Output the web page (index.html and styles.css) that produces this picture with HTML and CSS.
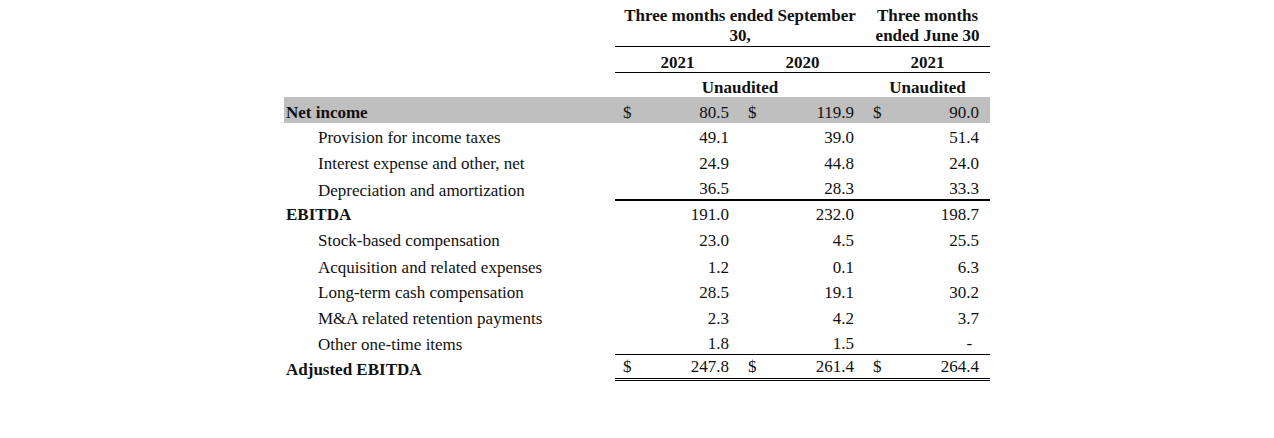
FILE: index.html
```html
<!DOCTYPE html>
<html>
<head>
<meta charset="utf-8">
<link rel="stylesheet" href="styles.css">
</head>
<body>
<div class="page">
<table class="fin">
  <colgroup>
    <col class="c-label">
    <col class="c-cur"><col class="c-val">
    <col class="c-cur"><col class="c-val">
    <col class="c-cur"><col class="c-val">
  </colgroup>
  <thead>
    <tr class="h1">
      <th></th>
      <th colspan="4" class="hd ul">Three months ended September<br>30,</th>
      <th colspan="2" class="hd ul">Three months<br>ended June 30</th>
    </tr>
    <tr class="h2">
      <th></th>
      <th colspan="2" class="hd ul yr">2021</th>
      <th colspan="2" class="hd ul yr">2020</th>
      <th colspan="2" class="hd ul">2021</th>
    </tr>
    <tr class="h3">
      <th></th>
      <th colspan="4" class="hd">Unaudited</th>
      <th colspan="2" class="hd">Unaudited</th>
    </tr>
  </thead>
  <tbody>
    <tr class="row shade r26">
      <td class="lbl b">Net income</td>
      <td class="cur">$</td><td class="val">80.5</td>
      <td class="cur">$</td><td class="val">119.9</td>
      <td class="cur">$</td><td class="val">90.0</td>
    </tr>
    <tr class="row r25">
      <td class="lbl ind">Provision for income taxes</td>
      <td class="cur"></td><td class="val">49.1</td>
      <td class="cur"></td><td class="val">39.0</td>
      <td class="cur"></td><td class="val">51.4</td>
    </tr>
    <tr class="row r26">
      <td class="lbl ind">Interest expense and other, net</td>
      <td class="cur"></td><td class="val">24.9</td>
      <td class="cur"></td><td class="val">44.8</td>
      <td class="cur"></td><td class="val">24.0</td>
    </tr>
    <tr class="row sub r27">
      <td class="lbl ind">Depreciation and amortization</td>
      <td class="cur"></td><td class="val">36.5</td>
      <td class="cur"></td><td class="val">28.3</td>
      <td class="cur"></td><td class="val">33.3</td>
    </tr>
    <tr class="row r24">
      <td class="lbl b">EBITDA</td>
      <td class="cur"></td><td class="val">191.0</td>
      <td class="cur"></td><td class="val">232.0</td>
      <td class="cur"></td><td class="val">198.7</td>
    </tr>
    <tr class="row r26">
      <td class="lbl ind">Stock-based compensation</td>
      <td class="cur"></td><td class="val">23.0</td>
      <td class="cur"></td><td class="val">4.5</td>
      <td class="cur"></td><td class="val">25.5</td>
    </tr>
    <tr class="row r27">
      <td class="lbl ind">Acquisition and related expenses</td>
      <td class="cur"></td><td class="val">1.2</td>
      <td class="cur"></td><td class="val">0.1</td>
      <td class="cur"></td><td class="val">6.3</td>
    </tr>
    <tr class="row r25">
      <td class="lbl ind">Long-term cash compensation</td>
      <td class="cur"></td><td class="val">28.5</td>
      <td class="cur"></td><td class="val">19.1</td>
      <td class="cur"></td><td class="val">30.2</td>
    </tr>
    <tr class="row r26">
      <td class="lbl ind">M&amp;A related retention payments</td>
      <td class="cur"></td><td class="val">2.3</td>
      <td class="cur"></td><td class="val">4.2</td>
      <td class="cur"></td><td class="val">3.7</td>
    </tr>
    <tr class="row sub1 r26">
      <td class="lbl ind">Other one-time items</td>
      <td class="cur"></td><td class="val">1.8</td>
      <td class="cur"></td><td class="val">1.5</td>
      <td class="cur"></td><td class="val dash">-</td>
    </tr>
    <tr class="row total r26">
      <td class="lbl b">Adjusted EBITDA</td>
      <td class="cur">$</td><td class="val">247.8</td>
      <td class="cur">$</td><td class="val">261.4</td>
      <td class="cur">$</td><td class="val">264.4</td>
    </tr>
  </tbody>
</table>
</div>
</body>
</html>
```

FILE: styles.css
```css
html, body {
  margin: 0;
  padding: 0;
  background: #ffffff;
}

.page {
  padding: 4px 0 0 284px;
  font-family: "Liberation Serif", "Times New Roman", serif;
  font-size: 17px;
  color: #111111;
}

.fin {
  table-layout: fixed;
  width: 706px;
  border-collapse: separate;
  border-spacing: 0;
}

.c-label { width: 331px; }
.c-cur { width: 24px; }
.c-val { width: 101px; }

.fin th,
.fin td {
  padding: 0;
  line-height: 20px;
  white-space: nowrap;
  box-sizing: border-box;
}

.hd {
  font-weight: bold;
  text-align: center;
  vertical-align: bottom;
}

.h1 .hd {
  line-height: 20px;
  white-space: normal;
}

.h1 th { height: 43px; vertical-align: bottom; }
.h2 th { height: 26px; line-height: 18px; }
.h3 th { height: 24px; line-height: 18px; }

.ul { border-bottom: 1px solid #000; }

.yr { padding-left: 4px; }

.row td {
  vertical-align: bottom;
  padding-bottom: 0;
}

.r24 td { height: 24px; }
.r25 td { height: 25px; }
.r26 td { height: 26px; }
.r27 td { height: 27px; }

.shade td { background: #bfbfbf; }

.lbl { text-align: left; }
.lbl.b { font-weight: bold; padding-left: 2px; }
.lbl.ind { padding-left: 34px; }

.cur { padding-left: 8px !important; text-align: left; }
.val { text-align: right; padding-right: 11px !important; }
.val.dash { padding-right: 18px !important; }

.sub td:not(.lbl) { border-bottom: 2px solid #000; }
.sub1 td:not(.lbl) { border-bottom: 1px solid #000; }

.total td { padding-bottom: 1px; }
.total td:not(.lbl) { border-bottom: 3px double #000; }
```
